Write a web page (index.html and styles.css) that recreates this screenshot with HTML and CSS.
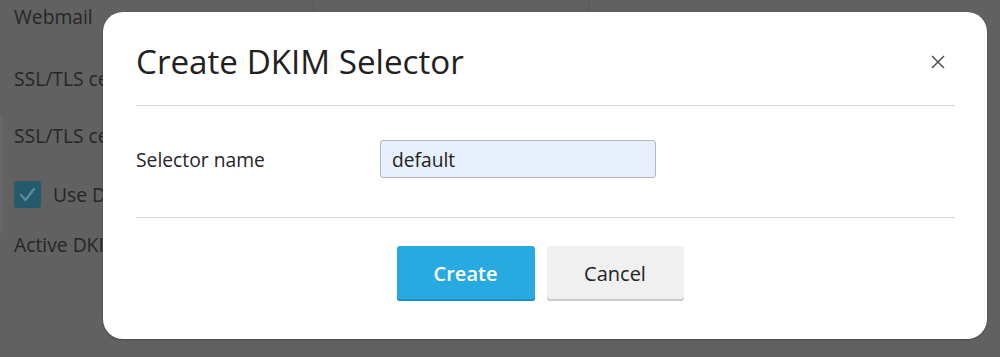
FILE: index.html
```html
<!DOCTYPE html>
<html lang="en">

<head>
    <meta charset="UTF-8">
    <meta name="viewport" content="width=device-width, initial-scale=1.0">
    <title>Mail Settings</title>
    <link rel="stylesheet" href="styles.css">
</head>

<body>
    <!-- Page behind the dialog (dimmed) -->
    <div class="page">
        <div class="top-field"></div>
        <div class="row first">Webmail</div>
        <div class="row spaced">SSL/TLS certificate</div>
        <div class="panel">
            <div class="row">SSL/TLS certificate</div>
            <div class="row check-row">
                <span class="checkbox">
                    <svg width="27" height="27" viewBox="0 0 27 27">
                        <path d="M7 14l4.5 5L20 8" fill="none" stroke="#5d8a98" stroke-width="2.4" stroke-linecap="round" stroke-linejoin="round" />
                    </svg>
                </span>
                Use DKIM spam protection system
            </div>
        </div>
        <div class="row">Active DKIM selectors</div>
    </div>

    <!-- Create DKIM Selector dialog -->
    <div class="modal">
        <div class="modal-header">
            <h2>Create DKIM Selector</h2>
            <button class="close" type="button" aria-label="Close">
                <svg width="16" height="16" viewBox="0 0 16 16">
                    <path d="M2 2l12 12M14 2L2 14" stroke="#555" stroke-width="1.6" />
                </svg>
            </button>
        </div>
        <form class="modal-body">
            <label for="selector">Selector name</label>
            <input type="text" id="selector" name="selector" value="default" />
        </form>
        <div class="modal-footer">
            <button class="btn primary" type="button">Create</button>
            <button class="btn" type="button">Cancel</button>
        </div>
    </div>
</body>

</html>
```

FILE: styles.css
```css
body {
    font-family: "Open Sans", "DejaVu Sans", sans-serif;
    background-color: #616161;
    margin: 0;
    padding: 0;
    height: 357px;
    overflow: hidden;
    color: #262626;
}

.page {
    position: relative;
    padding: 0 14px;
    font-size: 19.3px;
}

.top-field {
    position: absolute;
    left: 313px;
    top: -4px;
    width: 274px;
    height: 15px;
    border: 1px solid #575757;
    border-radius: 3px;
}

.row {
    height: 24px;
    line-height: 24px;
    display: flex;
    align-items: center;
    gap: 12px;
    white-space: nowrap;
}

.row.first {
    padding-top: 5px;
}

.row.spaced {
    margin-top: 38px;
}

.panel {
    margin: 24px 0 0 -14px;
    padding: 9px 14px 25px 11px;
    border-left: 3px solid #676767;
}

.check-row {
    margin-top: 33px;
    height: 27px;
}

.checkbox {
    width: 27px;
    height: 27px;
    background: #245a6b;
    border-radius: 3px;
    display: inline-flex;
}

.modal {
    position: absolute;
    left: 103px;
    top: 12px;
    width: 884px;
    height: 327px;
    background: white;
    border-radius: 20px;
    padding: 0 32px 0 33px;
    box-sizing: border-box;
    box-shadow: 0 1px 2px rgba(0, 0, 0, 0.25);
}

.modal-header {
    height: 94px;
    display: flex;
    align-items: center;
    justify-content: space-between;
    border-bottom: 1px solid #d6d6d6;
    padding-top: 6px;
    box-sizing: border-box;
}

.modal-header h2 {
    margin: 0;
    font-size: 33.2px;
    font-weight: 400;
    color: #222;
    line-height: 40px;
}

.close {
    background: none;
    border: none;
    padding: 0;
    margin-right: 9px;
    width: 16px;
    height: 16px;
    cursor: pointer;
}

.modal-body {
    margin: 0;
    height: 112px;
    display: flex;
    align-items: center;
    border-bottom: 1px solid #d6d6d6;
    box-sizing: border-box;
    padding-bottom: 5px;
}

label {
    width: 244px;
    font-size: 19.3px;
    color: #262626;
}

input {
    width: 276px;
    height: 38px;
    box-sizing: border-box;
    padding: 0 11px;
    border: 1px solid #b7b7b7;
    border-radius: 3px;
    background: #e8f0fe;
    font-family: inherit;
    font-size: 19.2px;
    color: #222;
}

.modal-footer {
    display: flex;
    justify-content: center;
    gap: 12px;
    padding: 28px 11px 0 0;
}

.btn {
    width: 137px;
    height: 55px;
    border: none;
    border-radius: 3px;
    background: #f0f0f0;
    box-shadow: inset 0 -2px 0 #c9c9c9;
    font-family: inherit;
    font-size: 20px;
    color: #222;
    cursor: pointer;
}

.btn.primary {
    width: 138px;
    background: #27aae0;
    box-shadow: inset 0 -2px 0 #1f8fc0;
    color: white;
    font-weight: 600;
}
```
